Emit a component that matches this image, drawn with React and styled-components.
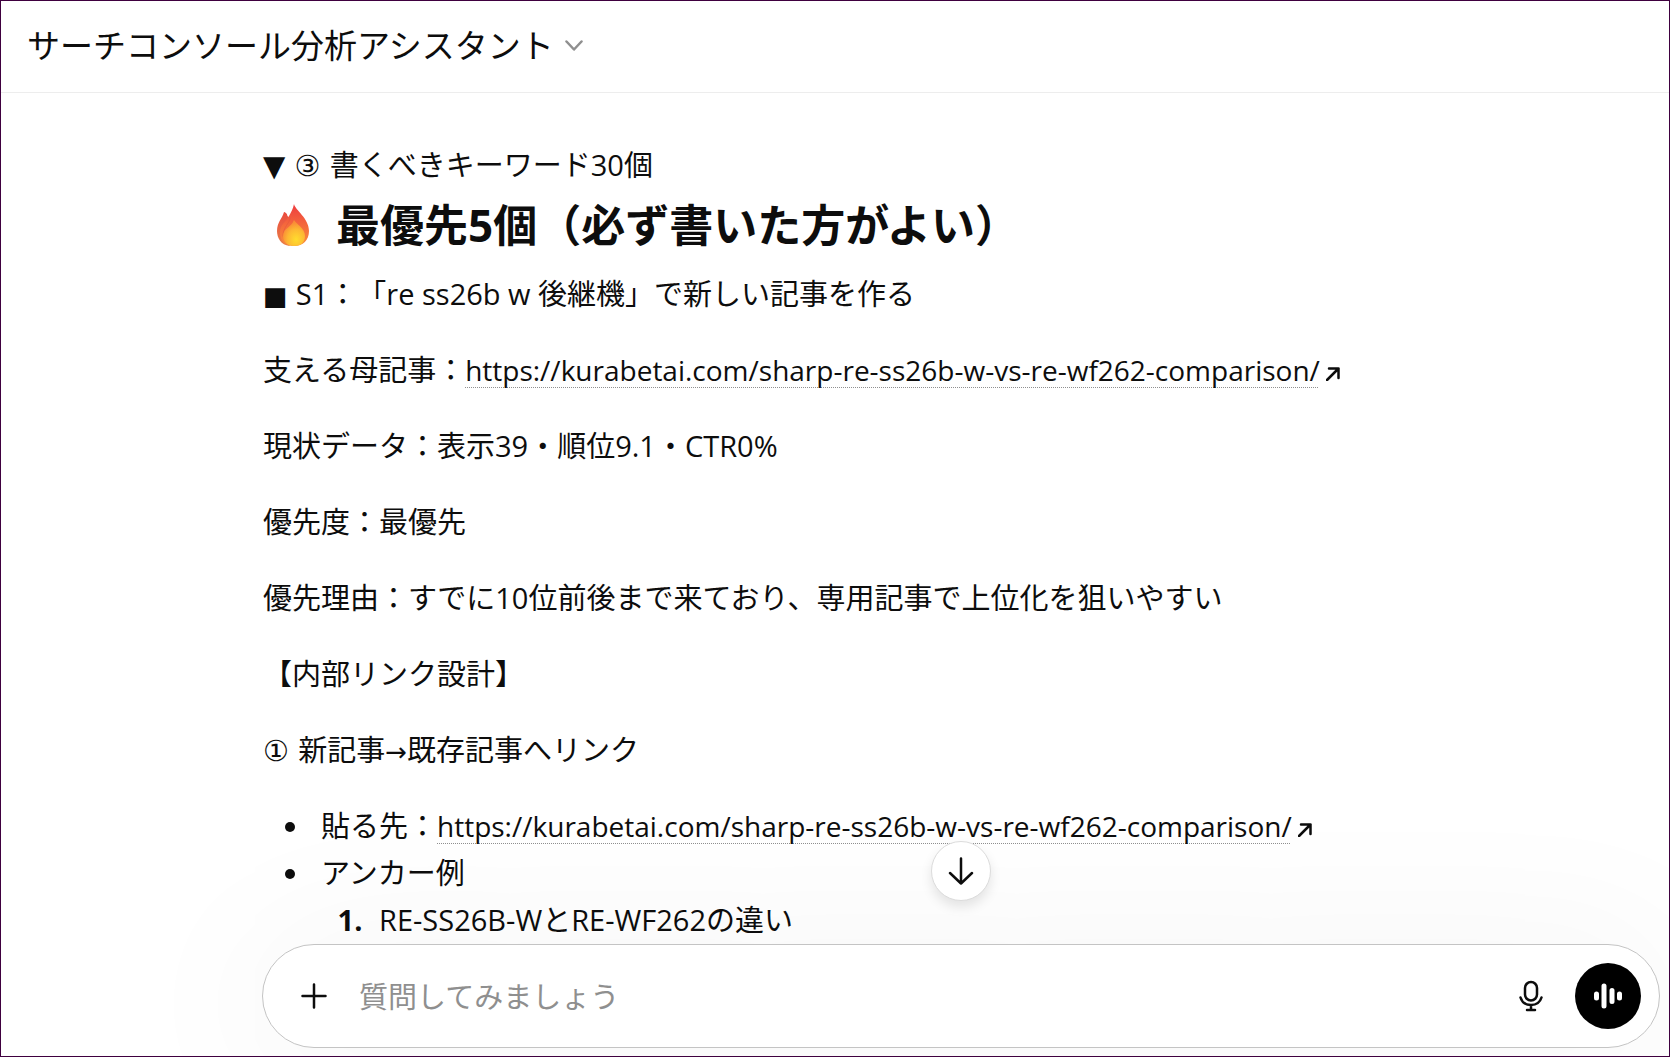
import React from 'react';
import styled, { createGlobalStyle } from 'styled-components';

const ARTICLE_URL = 'https://kurabetai.com/sharp-re-ss26b-w-vs-re-wf262-comparison/';

const ArticleLink = () => (
    <>
        <Link href={ARTICLE_URL}>{ARTICLE_URL}</Link>
        <LinkArrow viewBox="0 0 14 14" aria-hidden="true">
            <path d="M1 13 12.500 1.500M3 1.500h9.500v9.500" />
        </LinkArrow>
    </>
);

const FireIcon = () => (
    <Fire viewBox="0 0 34 44" role="img" aria-label="火">
        <defs>
            <linearGradient id="flameOuter" x1="0.5" y1="0" x2="0.5" y2="1">
                <stop offset="0" stopColor="#ee3b40" />
                <stop offset="0.5" stopColor="#f4693c" />
                <stop offset="1" stopColor="#f9903a" />
            </linearGradient>
            <linearGradient id="flameLeft" x1="0.5" y1="0" x2="0.5" y2="1">
                <stop offset="0" stopColor="#ea4b3e" />
                <stop offset="1" stopColor="#e98047" />
            </linearGradient>
            <radialGradient id="flameInner" cx="0.6" cy="0.75" r="0.65">
                <stop offset="0" stopColor="#ffdc2e" />
                <stop offset="0.6" stopColor="#fdb833" />
                <stop offset="1" stopColor="#f98d36" />
            </radialGradient>
        </defs>
        <path d="M8 9c1 0 3 1 3.500 4l8 8-6 22C5 42 1 35 1 28 1 19 6 16 8 9Z" fill="url(#flameLeft)" />
        <path d="M18 1c1 6 15 14 15 27 0 9-6 15-15 15C9 43 4 37 4 30c0-9 6-11 9-17 2-4 4-7 5-12Z" fill="url(#flameOuter)" />
        <path d="M14 15c0 5-7 9-7 18" fill="none" stroke="#e2573c" strokeWidth="1" opacity="0.6" />
        <path d="M18 17c2 4 11 8 11 16 0 7-5 10-11 10S7 39 7 33c0-8 9-9 11-16Z" fill="url(#flameInner)" />
    </Fire>
);

const App = () => {
    return (
        <>
            <GlobalStyle />
            <Page>
                <Header>
                    <TitleButton type="button">
                        サーチコンソール分析アシスタント
                        <Chevron viewBox="0 0 18 12" aria-hidden="true">
                            <path d="m1.500 1.500 7.500 8 7.500-8" />
                        </Chevron>
                    </TitleButton>
                </Header>

                <Messages>
                    <Lead>
                        <Symbol $size={29}>▼ ③ </Symbol>書くべきキーワード30個
                    </Lead>
                    <Heading>
                        <FireIcon />
                        最優先5個（必ず書いた方がよい）
                    </Heading>
                    <Text>
                        <Symbol>■ </Symbol>S1：「re ss26b w 後継機」で新しい記事を作る
                    </Text>
                    <Text>
                        支える母記事：<ArticleLink />
                    </Text>
                    <Text>現状データ：表示39・順位9.1・CTR0%</Text>
                    <Text>優先度：最優先</Text>
                    <Text>優先理由：すでに10位前後まで来ており、専用記事で上位化を狙いやすい</Text>
                    <Text>【内部リンク設計】</Text>
                    <Text>
                        <Symbol $size={29}>① </Symbol>新記事<Symbol>→</Symbol>既存記事へリンク
                    </Text>
                    <BulletList>
                        <li>
                            貼る先：<ArticleLink />
                        </li>
                        <li>
                            アンカー例
                            <NumberList>
                                <li>RE-SS26B-WとRE-WF262の違い</li>
                            </NumberList>
                        </li>
                    </BulletList>
                </Messages>

                <Composer onSubmit={(e) => e.preventDefault()}>
                    <ScrollButton type="button" aria-label="一番下へ移動">
                        <svg width="26" height="28" viewBox="0 0 26 28">
                            <path d="M13 1.500v25M2 16l11 10.500L24 16" />
                        </svg>
                    </ScrollButton>
                    <IconButton type="button" aria-label="追加">
                        <svg width="26" height="26" viewBox="0 0 26 26">
                            <path d="M13 1.500v23M1.500 13h23" />
                        </svg>
                    </IconButton>
                    <Prompt type="text" aria-label="質問" placeholder="質問してみましょう" />
                    <IconButton type="button" aria-label="音声入力">
                        <svg width="24" height="32" viewBox="0 0 24 32">
                            <rect x="6" y="2" width="12" height="18.500" rx="6" />
                            <path d="M1.500 17.500c1.500 5 5.500 7.500 10.500 7.500s9-2.500 10.500-7.500M12 25v5M8 30h8" />
                        </svg>
                    </IconButton>
                    <VoiceButton type="button" aria-label="音声モード">
                        <svg width="30" height="26" viewBox="0 0 30 26">
                            <path d="M3.500 11v4M11 3v20M19 7.500v11M26.500 11v4" />
                        </svg>
                    </VoiceButton>
                </Composer>
            </Page>
        </>
    );
};

export default App;

const GlobalStyle = createGlobalStyle`
    * {
        box-sizing: border-box;
    }

    body {
        margin: 0;
        background: #fff;
        color: #0d0d0d;
        font-family: 'Open Sans', 'Noto Sans CJK JP', sans-serif;
        font-size: 29px;
        line-height: 47px;
        text-spacing-trim: space-all;
    }

    button,
    input {
        padding: 0;
        border: 0;
        background: none;
        color: inherit;
        font: inherit;
    }

    button {
        cursor: pointer;
    }

    svg {
        fill: none;
        stroke: currentColor;
        stroke-linecap: round;
        stroke-linejoin: round;
    }
`;

const Page = styled.div`
    display: flex;
    flex-direction: column;
    height: 100vh;
    border: 1px solid #3f003f;
    overflow: hidden;
`;

const Header = styled.header`
    flex: none;
    padding: 21px 26px 23px;
    border-bottom: 1px solid #ededed;
`;

const TitleButton = styled.button`
    display: flex;
    align-items: center;
    gap: 11px;
    font-size: 33px;
`;

const Chevron = styled.svg`
    width: 18px;
    height: 12px;
    color: #8f8f8f;
    stroke-width: 2.5;
`;

const Messages = styled.main`
    flex: 1;
    min-height: 0;
    padding: 48px 10px 0 262px;
    overflow: hidden;
`;

const Lead = styled.p`
    margin: 0;
`;

const Symbol = styled.span`
    font-family: 'DejaVu Sans', sans-serif;
    font-size: ${({ $size = 26 }) => $size}px;
    line-height: 1;
`;

const Heading = styled.h1`
    display: flex;
    align-items: center;
    gap: 26px;
    margin: 8px 0 16px;
    padding-left: 13px;
    font-size: 44px;
    line-height: 58px;
    font-weight: 700;
`;

const Fire = styled.svg`
    flex: none;
    width: 34px;
    height: 44px;
    stroke: none;
`;

const Text = styled.p`
    margin: 0 0 29px;
`;

const Link = styled.a`
    color: inherit;
    font-size: 28px;
    line-height: 1;
    text-decoration: underline dotted #8f8f8f 1px;
    text-underline-offset: 6px;
    text-decoration-skip-ink: none;
`;

const LinkArrow = styled.svg`
    width: 14px;
    height: 14px;
    margin-left: 6px;
    stroke-width: 2.5;
`;

const BulletList = styled.ul`
    margin: 0;
    padding-left: 49px;

    li {
        padding-left: 9px;
    }
`;

const NumberList = styled.ol`
    margin: 0;
    padding-left: 49px;

    li::marker {
        font-weight: 700;
    }
`;

const Composer = styled.form`
    position: relative;
    flex: none;
    display: flex;
    align-items: center;
    gap: 32px;
    height: 104px;
    margin: 0 9px 8px 261px;
    padding: 0 18px 0 38px;
    border: 1px solid #c4c4c4;
    border-radius: 52px;
    background: #fff;
    box-shadow: 0 8px 160px 20px rgba(0, 0, 0, 0.04);
`;

const ScrollButton = styled.button`
    position: absolute;
    top: -104px;
    left: 50%;
    display: flex;
    align-items: center;
    justify-content: center;
    width: 60px;
    height: 60px;
    margin-left: -30px;
    border: 1px solid #dcdcdc;
    border-radius: 50%;
    background: #fff;
    box-shadow: 0 6px 12px rgba(0, 0, 0, 0.1);
    stroke-width: 2.5;
`;

const IconButton = styled.button`
    display: flex;
    stroke-width: 2.5;
`;

const Prompt = styled.input`
    flex: 1;
    min-width: 0;
    outline: none;

    &::placeholder {
        color: #8f8f8f;
        opacity: 1;
    }
`;

const VoiceButton = styled.button`
    display: flex;
    align-items: center;
    justify-content: center;
    width: 66px;
    height: 66px;
    border-radius: 50%;
    background: #000;
    color: #fff;
    stroke-width: 5;
`;
